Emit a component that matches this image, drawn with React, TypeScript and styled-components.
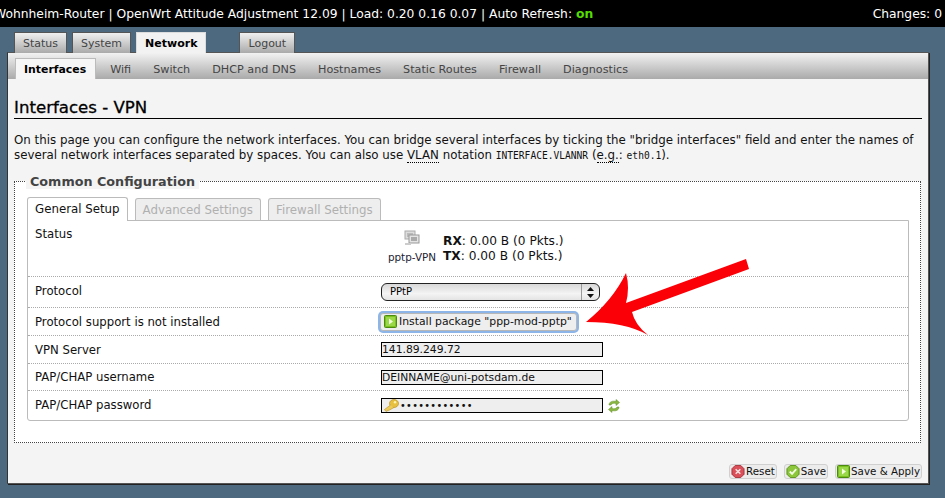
import React from 'react';
import styled, { createGlobalStyle } from 'styled-components';

const GlobalStyle = createGlobalStyle`
    html, body {
        margin: 0;
        padding: 0;
        background: #4d697f;
        font-family: "DejaVu Sans", Verdana, sans-serif;
        overflow: hidden;
    }
`;

const Page = styled.div`
    position: relative;
    width: 945px;
    height: 498px;
    overflow: hidden;
`;

const Header = styled.header`
    height: 27px;
    background: #000;
    color: #fff;
    display: flex;
    justify-content: space-between;
    align-items: center;
    font-size: 12.3px;
    padding: 0 3px 0 0;
    white-space: nowrap;
`;

const HeaderTitle = styled.div`
    margin-left: -6px;
`;

const On = styled.span`
    color: #55dd00;
    font-weight: bold;
`;

const MainTabs = styled.nav`
    display: flex;
    height: 25px;
    padding: 5px 0 0 14px;
    box-sizing: border-box;
    align-items: flex-start;
`;

const MainTab = styled.div<{ $active?: boolean; $gap?: number }>`
    position: relative;
    height: 21px;
    box-sizing: border-box;
    margin-right: ${p => p.$gap ?? 5}px;
    padding: 0 8px;
    font-size: 11px;
    line-height: 22px;
    border: 1px solid #555;
    border-bottom: none;
    color: ${p => (p.$active ? '#000' : '#444')};
    font-weight: ${p => (p.$active ? 'bold' : 'normal')};
    background: ${p => (p.$active ? '#f2f2f2' : 'linear-gradient(#f0f0f0, #aaaaaa)')};
    ${p => p.$active && 'border-color: #ddd; z-index: 1;'}
`;

const Panel = styled.main`
    width: 922px;
    height: 432px;
    margin: 0 0 0 7px;
    box-sizing: border-box;
    background: #f4f4f4;
    border: 1px solid #555;
    border-left-color: #333;
    box-shadow: 1px 1px 0 #222;
    display: flex;
    flex-direction: column;
`;

const SubTabs = styled.nav`
    height: 26px;
    flex: none;
    display: flex;
    align-items: flex-end;
    padding-left: 7px;
    box-sizing: border-box;
    background: linear-gradient(#f2f2f2, #aaaaaa);
`;

const SubTab = styled.div<{ $active?: boolean }>`
    height: ${p => (p.$active ? 21 : 20)}px;
    box-sizing: border-box;
    padding: 0 8px;
    margin-right: 6px;
    font-size: ${p => (p.$active ? 10.9 : 11.2)}px;
    line-height: 22px;
    color: ${p => (p.$active ? '#000' : '#444')};
    font-weight: ${p => (p.$active ? 'bold' : 'normal')};
    ${p => p.$active && `
        background: #f6f6f6;
        border: 1px solid #bbb;
        border-bottom: none;
        padding-right: 9px;
    `}
`;

const Content = styled.div`
    padding: 0 6px;
    flex: 1;
    display: flex;
    flex-direction: column;
`;

const Title = styled.h2`
    margin: 15px 0 0;
    height: 24px;
    font-size: 16.6px;
    line-height: 27px;
    font-weight: normal;
    color: #000;
    -webkit-text-stroke: 0.3px #000;
    border-bottom: 1px solid #000;
`;

const Description = styled.p`
    margin: 14px 0 0;
    font-size: 11.83px;
    line-height: 15px;
    color: #111;
    white-space: nowrap;
    height: 30px;
`;

const Abbr = styled.span`
    border-bottom: 1px dotted #000;
`;

const Code = styled.code`
    font-family: "DejaVu Sans Mono", monospace;
    font-size: 9.6px;
`;

const Fieldset = styled.section`
    position: relative;
    margin-top: 18px;
    width: 907px;
    height: 262px;
    box-sizing: border-box;
    background: #fff;
    border: 1px dotted #444;
    padding: 15px 12px 0;
`;

const Legend = styled.div`
    position: absolute;
    left: 11px;
    top: -8px;
    padding: 0 4px;
    background: #f4f4f4;
    font-size: 12.75px;
    line-height: 15px;
    font-weight: bold;
    color: #444;
`;

const SectionTabs = styled.div`
    display: flex;
    align-items: flex-end;
    height: 23px;
`;

const SectionTab = styled.div<{ $active?: boolean }>`
    height: ${p => (p.$active ? 24 : 22)}px;
    box-sizing: border-box;
    margin-right: 7px;
    padding: 0 7px;
    font-size: 11.8px;
    line-height: 23px;
    color: ${p => (p.$active ? '#111' : '#b0b0b0')};
    background: ${p => (p.$active ? '#fff' : '#eeeeee')};
    border: 1px solid #bbb;
    border-bottom: none;
    border-radius: 3px 3px 0 0;
    z-index: 1;
    margin-bottom: ${p => (p.$active ? -1 : 0)}px;
`;

const SectionBody = styled.div`
    width: 882px;
    height: 201px;
    box-sizing: border-box;
    border: 1px solid #bbb;
    border-radius: 0 0 3px 3px;
    display: flex;
    flex-direction: column;
`;

const Row = styled.div<{ $height: number; $last?: boolean }>`
    height: ${p => p.$height}px;
    box-sizing: border-box;
    flex: none;
    display: flex;
    padding-left: 7px;
    border-bottom: ${p => (p.$last ? 'none' : '1px dotted #aaa')};
`;

const Label = styled.div<{ $top: number }>`
    width: 346px;
    flex: none;
    padding-top: ${p => p.$top}px;
    font-size: 11.7px;
    line-height: 14px;
    color: #111;
`;

const Value = styled.div`
    display: flex;
    align-items: center;
    gap: 5px;
    flex: 1;
`;

const StatusBlock = styled.div`
    display: flex;
    align-items: flex-start;
    padding-top: 9px;
    align-self: flex-start;
    margin-left: 7px;
`;

const DeviceBox = styled.div`
    width: 48px;
    display: flex;
    flex-direction: column;
    align-items: center;
    font-size: 10.4px;
    line-height: 12px;
    color: #223;
    gap: 5px;
    white-space: nowrap;
`;

const Traffic = styled.div`
    margin: 4px 0 0 7px;
    font-size: 12.2px;
    line-height: 15px;
    color: #111;
    white-space: nowrap;
`;

const Select = styled.div`
    width: 219px;
    height: 18px;
    box-sizing: border-box;
    padding-left: 8px;
    border: 1px solid #222;
    border-radius: 6px;
    background: linear-gradient(#d8d8d8, #f4f4f4 60%, #e4e4e4);
    font-size: 10px;
    line-height: 16px;
    color: #000;
    display: flex;
    justify-content: space-between;
`;

const SelectArrows = styled.div`
    width: 17px;
    border-left: 1px solid #999;
    display: flex;
    align-items: center;
    justify-content: center;
    font-size: 0;
`;

const FocusButton = styled.div`
    height: 18px;
    box-sizing: border-box;
    padding: 0 4px 0 3px;
    margin-left: -1px;
    border: 1px solid #b7b7b7;
    border-radius: 3px;
    background: #eeeeee;
    box-shadow: 0 0 0 2px #8db5e8;
    font-size: 10.85px;
    line-height: 16px;
    color: #111;
    display: flex;
    align-items: center;
    gap: 2px;
    white-space: nowrap;
`;

const TextInput = styled.div`
    width: 222px;
    height: 15px;
    box-sizing: border-box;
    border: 1px solid #000;
    background: #eeeeee;
    font-size: 10.75px;
    line-height: 13px;
    color: #111;
    display: flex;
    align-items: center;
    white-space: nowrap;
`;

const Dots = styled.span`
    font-size: 9.7px;
    letter-spacing: 0.35px;
    color: #111;
`;

const Footer = styled.div`
    display: flex;
    justify-content: flex-end;
    gap: 7px;
    margin-top: 21px;
`;

const ActionButton = styled.div`
    height: 15px;
    box-sizing: border-box;
    padding: 0 1px;
    border: 1px solid #d0d0d0;
    border-radius: 3px;
    background: #ececec;
    font-size: 10.3px;
    line-height: 13px;
    color: #111;
    display: flex;
    align-items: center;
    gap: 1px;
    white-space: nowrap;
`;

const ArrowOverlay = styled.svg`
    position: absolute;
    left: 575px;
    top: 250px;
    pointer-events: none;
`;

const DeviceIcon = () => (
    <svg width="16" height="16" viewBox="0 0 16 16">
        <rect x="1" y="1" width="10" height="8" fill="#ddd" stroke="#aaa" />
        <rect x="3" y="3" width="6" height="4" fill="#bbb" />
        <rect x="5" y="5" width="10" height="8" fill="#e4e4e4" stroke="#999" />
        <rect x="7" y="7" width="6" height="4" fill="#aaa" />
        <rect x="1" y="13" width="6" height="2" fill="#ccc" />
    </svg>
);

const ApplyIcon = ({ size = 13 }: { size?: number }) => (
    <svg width={size} height={size} viewBox="0 0 13 13" style={{ flex: 'none' }}>
        <rect x="0.5" y="0.5" width="12" height="12" rx="1" fill="#7cc020" stroke="#4b8a10" />
        <rect x="2" y="2" width="9" height="9" fill="#9ad84a" />
        <path d="M5 3.5 L9 6.5 L5 9.5 Z" fill="#f4ffe0" />
    </svg>
);

const ResetIcon = () => (
    <svg width="14" height="13" viewBox="0 0 14 14" style={{ flex: 'none' }}>
        <path d="M4 .5 H10 L13.500 4 V10 L10 13.500 H4 L.5 10 V4 Z" fill="#d9505a" stroke="#a83038" />
        <path d="M4.500 4.500 L9.500 9.500 M9.500 4.500 L4.500 9.500" stroke="#fbe4e4" strokeWidth="1.600" />
    </svg>
);

const SaveIcon = () => (
    <svg width="14" height="13" viewBox="0 0 14 14" style={{ flex: 'none' }}>
        <path d="M4 .5 H10 L13.500 4 V10 L10 13.500 H4 L.5 10 V4 Z" fill="#8cc63a" stroke="#5a9018" />
        <path d="M3.500 7 L6 9.500 L10.500 4.500" fill="none" stroke="#f2fbe2" strokeWidth="2" />
    </svg>
);

const KeyIcon = () => (
    <svg width="15" height="13" viewBox="0 0 15 13" style={{ flex: 'none', margin: '0 1px 0 2px' }}>
        <ellipse cx="10" cy="4.500" rx="4.500" ry="4" fill="#e8c040" stroke="#b89020" strokeWidth="0.700" />
        <circle cx="11" cy="3.200" r="1.200" fill="#fff3b0" />
        <path d="M6.500 6 L.5 10.500 L2 12.500 L4 11.500 L5.500 11 L10 8.500" fill="#eccb58" stroke="#b89020" strokeWidth="0.600" />
    </svg>
);

const RefreshIcon = () => (
    <svg width="12" height="14" viewBox="0 0 12 14" style={{ flex: 'none' }}>
        <path d="M1 6 C1 2.500 5 1.500 8 2.500 L8 .5 L11.500 3.500 L8 6.500 L8 4.500 C6 4 3.500 4.200 3 6 Z" fill="#8ab840" stroke="#5d8a20" strokeWidth="0.500" />
        <path d="M11 8 C11 11.500 7 12.500 4 11.500 L4 13.500 L.5 10.500 L4 7.500 L4 9.500 C6 10 8.500 9.800 9 8 Z" fill="#8ab840" stroke="#5d8a20" strokeWidth="0.500" />
    </svg>
);

const subItems = ['Wifi', 'Switch', 'DHCP and DNS', 'Hostnames', 'Static Routes', 'Firewall', 'Diagnostics'];

export default function App() {
    return (
        <Page>
            <GlobalStyle />
            <Header>
                <HeaderTitle>
                    Wohnheim-Router | OpenWrt Attitude Adjustment 12.09 | Load: 0.20 0.16 0.07 | Auto Refresh: <On>on</On>
                </HeaderTitle>
                <div>Changes: 0</div>
            </Header>
            <MainTabs>
                <MainTab>Status</MainTab>
                <MainTab>System</MainTab>
                <MainTab $active $gap={33}>Network</MainTab>
                <MainTab>Logout</MainTab>
            </MainTabs>
            <Panel>
                <SubTabs>
                    <SubTab $active>Interfaces</SubTab>
                    {subItems.map(item => (
                        <SubTab key={item}>{item}</SubTab>
                    ))}
                </SubTabs>
                <Content>
                    <Title>Interfaces - VPN</Title>
                    <Description>
                        On this page you can configure the network interfaces. You can bridge several interfaces by ticking the "bridge interfaces" field and enter the names of
                        <br />
                        several network interfaces separated by spaces. You can also use <Abbr>VLAN</Abbr> notation <Code>INTERFACE.VLANNR</Code> (<Abbr>e.g.</Abbr>: <Code>eth0.1</Code>).
                    </Description>
                    <Fieldset>
                        <Legend>Common Configuration</Legend>
                        <SectionTabs>
                            <SectionTab $active>General Setup</SectionTab>
                            <SectionTab>Advanced Settings</SectionTab>
                            <SectionTab>Firewall Settings</SectionTab>
                        </SectionTabs>
                        <SectionBody>
                            <Row $height={56}>
                                <Label $top={6}>Status</Label>
                                <StatusBlock>
                                    <DeviceBox>
                                        <DeviceIcon />
                                        pptp-VPN
                                    </DeviceBox>
                                    <Traffic>
                                        <strong>RX</strong>: 0.00 B (0 Pkts.)
                                        <br />
                                        <strong>TX</strong>: 0.00 B (0 Pkts.)
                                    </Traffic>
                                </StatusBlock>
                            </Row>
                            <Row $height={31}>
                                <Label $top={7}>Protocol</Label>
                                <Value>
                                    <Select>
                                        PPtP
                                        <SelectArrows>
                                            <svg width="7" height="11" viewBox="0 0 7 11">
                                                <path d="M3.500 0 L7 4 H0 Z M3.500 11 L0 7 H7 Z" fill="#111" />
                                            </svg>
                                        </SelectArrows>
                                    </Select>
                                </Value>
                            </Row>
                            <Row $height={28}>
                                <Label $top={7}>Protocol support is not installed</Label>
                                <Value>
                                    <FocusButton>
                                        <ApplyIcon />
                                        Install package "ppp-mod-pptp"
                                    </FocusButton>
                                </Value>
                            </Row>
                            <Row $height={28}>
                                <Label $top={7}>VPN Server</Label>
                                <Value>
                                    <TextInput>141.89.249.72</TextInput>
                                </Value>
                            </Row>
                            <Row $height={27}>
                                <Label $top={6}>PAP/CHAP username</Label>
                                <Value>
                                    <TextInput>DEINNAME@uni-potsdam.de</TextInput>
                                </Value>
                            </Row>
                            <Row $height={29} $last>
                                <Label $top={7}>PAP/CHAP password</Label>
                                <Value>
                                    <TextInput>
                                        <KeyIcon />
                                        <Dots>••••••••••••</Dots>
                                    </TextInput>
                                    <RefreshIcon />
                                </Value>
                            </Row>
                        </SectionBody>
                    </Fieldset>
                    <Footer>
                        <ActionButton><ResetIcon />Reset</ActionButton>
                        <ActionButton><SaveIcon />Save</ActionButton>
                        <ActionButton><ApplyIcon />Save &amp; Apply</ActionButton>
                    </Footer>
                </Content>
            </Panel>
            <ArrowOverlay width="185" height="90" viewBox="0 0 185 90">
                <path d="M11 72 Q38 50 51 23 Q55 38 51 53 L171 9 L174 19 L57 62 Q60 75 73 85 Q50 72 11 72 Z" fill="#fb0007" />
            </ArrowOverlay>
        </Page>
    );
}
